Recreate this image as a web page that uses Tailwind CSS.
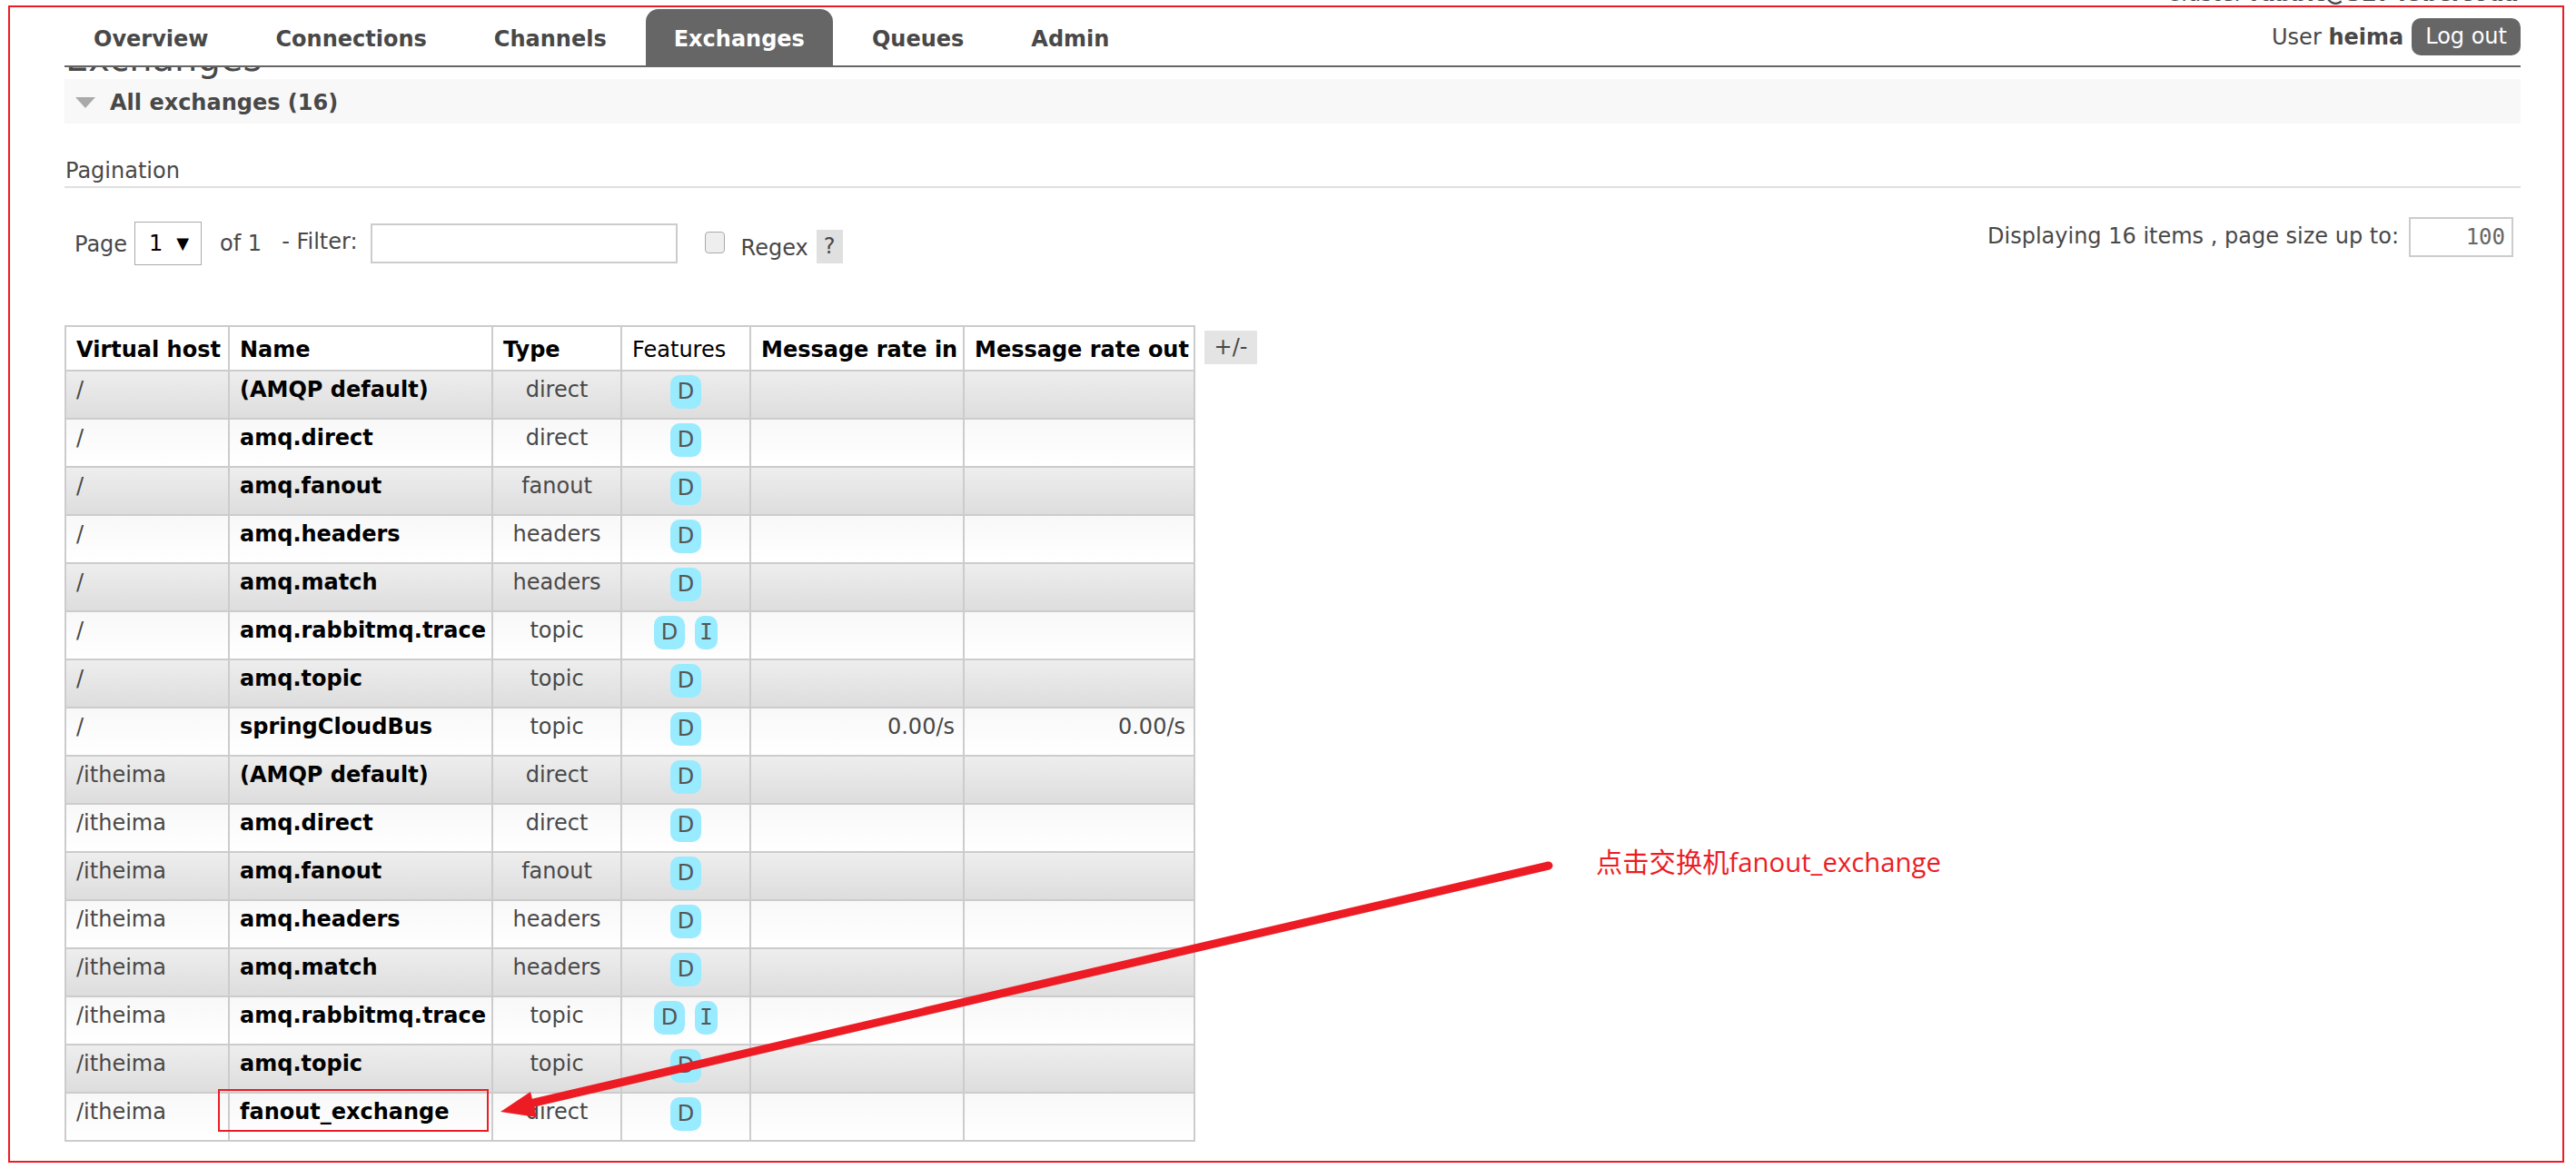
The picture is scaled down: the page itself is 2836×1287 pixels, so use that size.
<!DOCTYPE html>
<html lang="en">

<head>
  <meta charset="UTF-8">
  <title>RabbitMQ Management</title>
  <script src="https://cdn.jsdelivr.net/npm/@tailwindcss/browser@4"></script>
</head>

<body class="bg-white">
  <div class="relative w-[2836px] h-[1287px] overflow-hidden pl-[71px] pr-[61px] font-['DejaVu_Sans',sans-serif] text-[24px] leading-[30px] text-[#484848]">

    <!-- Header -->
    <div class="relative flex justify-between items-end h-[74px] border-b-2 border-[#666]">
      <ul class="flex items-end gap-[12px] pl-[1px] font-bold">
        <li class="h-[62px] px-[31px] pt-[18px]">Overview</li>
        <li class="h-[62px] px-[31px] pt-[18px]">Connections</li>
        <li class="h-[62px] px-[31px] pt-[18px]">Channels</li>
        <li class="h-[62px] px-[31px] pt-[18px] rounded-t-[14px] bg-[#666] text-white">Exchanges</li>
        <li class="h-[62px] px-[31px] pt-[18px]">Queues</li>
        <li class="h-[62px] px-[31px] pt-[18px]">Admin</li>
      </ul>
      <div class="absolute right-[2px] top-[-22px]">Cluster <b>rabbit@32745bcfc0da</b></div>
      <div class="flex items-center gap-[9px] mb-[11px]">
        <span>User <b>heima</b></span>
        <span class="h-[41px] px-[15px] py-[5px] rounded-[10px] bg-[#666] text-white">Log out</span>
      </div>
    </div>

    <!-- Titre coupe par le header -->
    <div class="h-[13px] overflow-hidden">
      <h1 class="mt-[-35px] ml-[1px] text-[40px] leading-[50px] text-[#484848]">Exchanges</h1>
    </div>

    <div class="flex items-center h-[49px] bg-[#f8f8f8] pl-[12px] pt-[2px] font-bold">
      <svg class="w-[22px] h-[12px] mr-[16px]" viewBox="0 0 22 12"><polygon points="0,0 22,0 11,12" fill="#aaa"/></svg>
      <span>All exchanges (16)</span>
    </div>

    <!-- Pagination -->
    <div class="mt-[37px] h-[34px] border-b-2 border-[#e0e0e0] leading-[30px] pl-[1px]">Pagination</div>

    <div class="flex justify-between h-[151px]">
      <div class="flex items-start pl-[11px] pt-[37px]">
        <span class="mt-[10px]">Page</span>
        <span class="flex items-center justify-between ml-[8px] w-[74px] h-[48px] border border-[#aaa] pl-[15px] pr-[13px] text-black"><span>1</span><span class="text-[18px]">▼</span></span>
        <span class="mt-[9px] ml-[20px]">of 1</span>
        <span class="mt-[7px] ml-[22px]">- Filter:</span>
        <span class="ml-[14px] mt-[2px] w-[338px] h-[44px] border-2 border-[#ccc]"></span>
        <span class="ml-[30px] mt-[11px] w-[22px] h-[24px] rounded-[4px] border border-[#aaa] bg-[#eee]"></span>
        <span class="ml-[18px] mt-[14px]">Regex</span>
        <span class="ml-[9px] mt-[9px] w-[29px] h-[37px] bg-[#e0e0e0] text-center pt-[3px]">?</span>
      </div>
      <div class="flex items-start pt-[32px] pr-[8px]">
        <span class="mt-[6px]">Displaying 16 items , page size up to:</span>
        <span class="ml-[11px] w-[115px] h-[44px] border-2 border-[#ccc] text-right pr-[7px] pt-[5px] font-['DejaVu_Sans_Mono',monospace] text-[#666]">100</span>
      </div>
    </div>

    <!-- Tableau des exchanges -->
    <div class="flex items-start">
      <table class="table-fixed w-[1245px] border-collapse whitespace-nowrap">
        <colgroup>
          <col class="w-[180px]"><col class="w-[290px]"><col class="w-[142px]"><col class="w-[142px]"><col class="w-[235px]"><col class="w-[254px]">
        </colgroup>
        <thead>
          <tr class="h-[49px] text-black">
            <th class="border-2 border-[#ccc] text-left font-bold px-[11px] pt-[2px]">Virtual host</th>
            <th class="border-2 border-[#ccc] text-left font-bold px-[11px] pt-[2px]">Name</th>
            <th class="border-2 border-[#ccc] text-left font-bold px-[11px] pt-[2px]">Type</th>
            <th class="border-2 border-[#ccc] text-left font-normal px-[11px] pt-[2px]">Features</th>
            <th class="border-2 border-[#ccc] text-left font-bold px-[11px] pt-[2px]">Message rate in</th>
            <th class="border-2 border-[#ccc] text-left font-bold px-[11px] pt-[2px]">Message rate out</th>
          </tr>
        </thead>
        <tbody id="rows"></tbody>
      </table>
      <span class="ml-[10px] mt-[6px] w-[58px] h-[37px] bg-[#e4e4e4] text-center pt-[3px]">+/-</span>
    </div>

    <!-- Annotations rouges -->
    <div class="absolute left-[9px] top-[6px] w-[2814px] h-[1274px] border-2 border-[#ed1c24]"></div>
    <div class="absolute left-[240px] top-[1199px] w-[298px] h-[47px] border-2 border-[#ed1c24]"></div>
    <svg class="absolute left-0 top-0 w-[2836px] h-[1287px]" viewBox="0 0 2836 1287">
      <line x1="1705" y1="953" x2="575" y2="1217" stroke="#ed1c24" stroke-width="9" stroke-linecap="round"/>
      <polygon points="551,1224 584,1202 591,1230" fill="#ed1c24"/>
    </svg>
    <div class="absolute left-[1757px] top-[929px] text-[29.3px] leading-[40px] text-[#ed1c24] font-['Open_Sans','Noto_Sans_CJK_SC',sans-serif]">点击交换机fanout_exchange</div>
  </div>

  <script>
    const exchanges = [
      ['/', '(AMQP default)', 'direct'],
      ['/', 'amq.direct', 'direct'],
      ['/', 'amq.fanout', 'fanout'],
      ['/', 'amq.headers', 'headers'],
      ['/', 'amq.match', 'headers'],
      ['/', 'amq.rabbitmq.trace', 'topic', true],
      ['/', 'amq.topic', 'topic'],
      ['/', 'springCloudBus', 'topic', false, '0.00/s'],
      ['/itheima', '(AMQP default)', 'direct'],
      ['/itheima', 'amq.direct', 'direct'],
      ['/itheima', 'amq.fanout', 'fanout'],
      ['/itheima', 'amq.headers', 'headers'],
      ['/itheima', 'amq.match', 'headers'],
      ['/itheima', 'amq.rabbitmq.trace', 'topic', true],
      ['/itheima', 'amq.topic', 'topic'],
      ['/itheima', 'fanout_exchange', 'direct'],
    ];

    const cell = 'border-2 border-[#ccc] align-top';
    const pill = 'inline-block h-[37px] rounded-[10px] bg-[#99ebff] text-[#555] leading-[37px] text-center';

    document.getElementById('rows').innerHTML = exchanges.map(([vhost, name, type, internal, rate], i) => `
      <tr class="h-[53px] ${i % 2 == 0 ? 'bg-linear-to-b from-[#eeeeee] to-[#dddddd]' : 'bg-linear-to-b from-[#f8f8f8] to-[#ffffff]'}">
        <td class="${cell} px-[11px] pt-[5px]">${vhost}</td>
        <td class="${cell} px-[11px] pt-[5px] font-bold text-black">${name}</td>
        <td class="${cell} text-center pt-[5px]">${type}</td>
        <td class="${cell} text-center pt-[4px]">
          <span class="${pill} w-[34px]">D</span>${internal ? `<span class="${pill} w-[25px] ml-[11px] font-['DejaVu_Sans_Mono',monospace]">I</span>` : ''}
        </td>
        <td class="${cell} text-right px-[9px] pt-[5px]">${rate ?? ''}</td>
        <td class="${cell} text-right px-[9px] pt-[5px]">${rate ?? ''}</td>
      </tr>`).join('');
  </script>
</body>

</html>
